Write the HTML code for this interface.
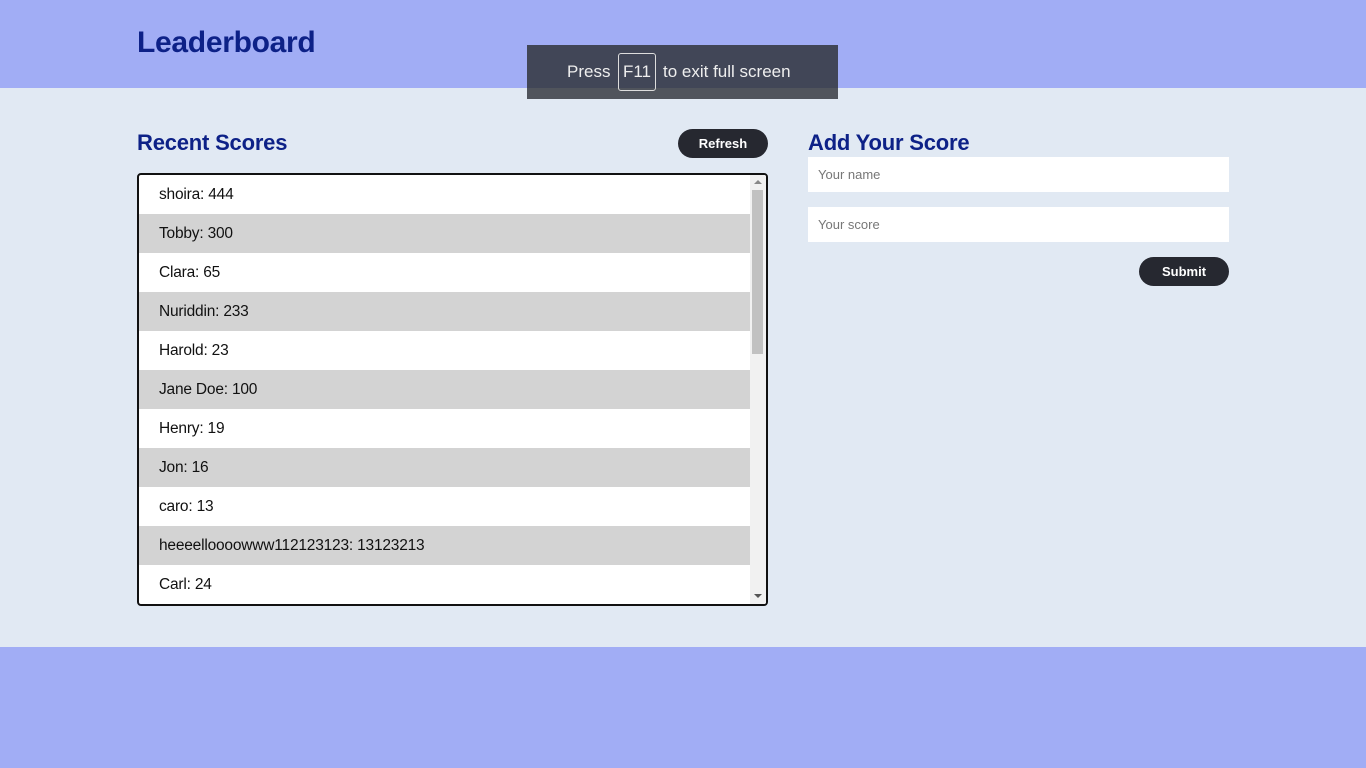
<!DOCTYPE html>
<html><head><style>
body{margin:0;width:1366px;height:768px;background:#a1adf5;font-family:"Liberation Sans",sans-serif;position:relative;overflow:hidden}
.hdr{position:absolute;left:0;top:0;width:1366px;height:88px;background:#a1adf5}
h1{position:absolute;left:137px;top:26px;margin:0;font-size:30px;color:#0d2187;font-weight:bold;letter-spacing:-0.3px}
.main{position:absolute;left:0;top:88px;width:1366px;height:559px;background:#e1e9f3}
h2{position:absolute;margin:0;font-size:22px;color:#0d2187;font-weight:bold;letter-spacing:-0.2px}
.btn{position:absolute;background:#262830;color:#fff;font-weight:bold;font-size:13px;border-radius:15px;text-align:center;line-height:29px;height:29px}
.list{position:absolute;left:137px;top:173px;width:627px;height:429px;border:2px solid #111;border-radius:4px;background:#fff;overflow:hidden}
.row{height:39px;line-height:39px;padding-left:20px;font-size:15.5px;color:#111;width:592px;letter-spacing:-0.2px}
.row:nth-child(even){background:#d3d3d3}
.sb{position:absolute;right:0;top:0;width:16px;height:429px;background:#f1f1f1}
.thumb{position:absolute;left:2px;top:15px;width:11px;height:164px;background:#c1c1c1}
.inp{position:absolute;left:808px;width:411px;height:35px;background:#fff;font-size:13px;color:#777;line-height:35px;padding-left:10px}
.f11{position:absolute;left:527px;top:45px;width:311px;height:54px;background:#414657;color:#eee;font-family:"Liberation Sans",sans-serif;font-size:17px}
</style></head><body>
<div class="hdr"></div>
<h1>Leaderboard</h1>
<div class="main"></div>
<h2 style="left:137px;top:130px">Recent Scores</h2>
<div class="btn" style="left:678px;top:129px;width:90px">Refresh</div>
<div class="list">
<div class="row">shoira: 444</div><div class="row">Tobby: 300</div><div class="row">Clara: 65</div><div class="row">Nuriddin: 233</div><div class="row">Harold: 23</div><div class="row">Jane Doe: 100</div><div class="row">Henry: 19</div><div class="row">Jon: 16</div><div class="row">caro: 13</div><div class="row">heeeelloooowww112123123: 13123213</div><div class="row">Carl: 24</div>
<div class="sb"><div class="thumb"></div><div style="position:absolute;left:4px;top:5px;border:4px solid transparent;border-bottom:4px solid #888;border-top:0"></div><div style="position:absolute;left:4px;bottom:6px;border:4px solid transparent;border-top:4px solid #555;border-bottom:0"></div></div>
</div>
<h2 style="left:808px;top:130px">Add Your Score</h2>
<div class="inp" style="top:157px">Your name</div>
<div class="inp" style="top:207px">Your score</div>
<div class="btn" style="left:1139px;top:257px;width:90px">Submit</div>
<div class="f11"><div style="position:absolute;left:0;top:43px;width:311px;height:11px;background:#50545c"></div>
<span style="position:absolute;left:40px;top:17px">Press</span>
<span style="position:absolute;left:91px;top:8px;width:36px;height:36px;border:1px solid #ddd;border-radius:3px;line-height:36px;text-align:center">F11</span>
<span style="position:absolute;left:136px;top:17px">to exit full screen</span></div>
</body></html>
